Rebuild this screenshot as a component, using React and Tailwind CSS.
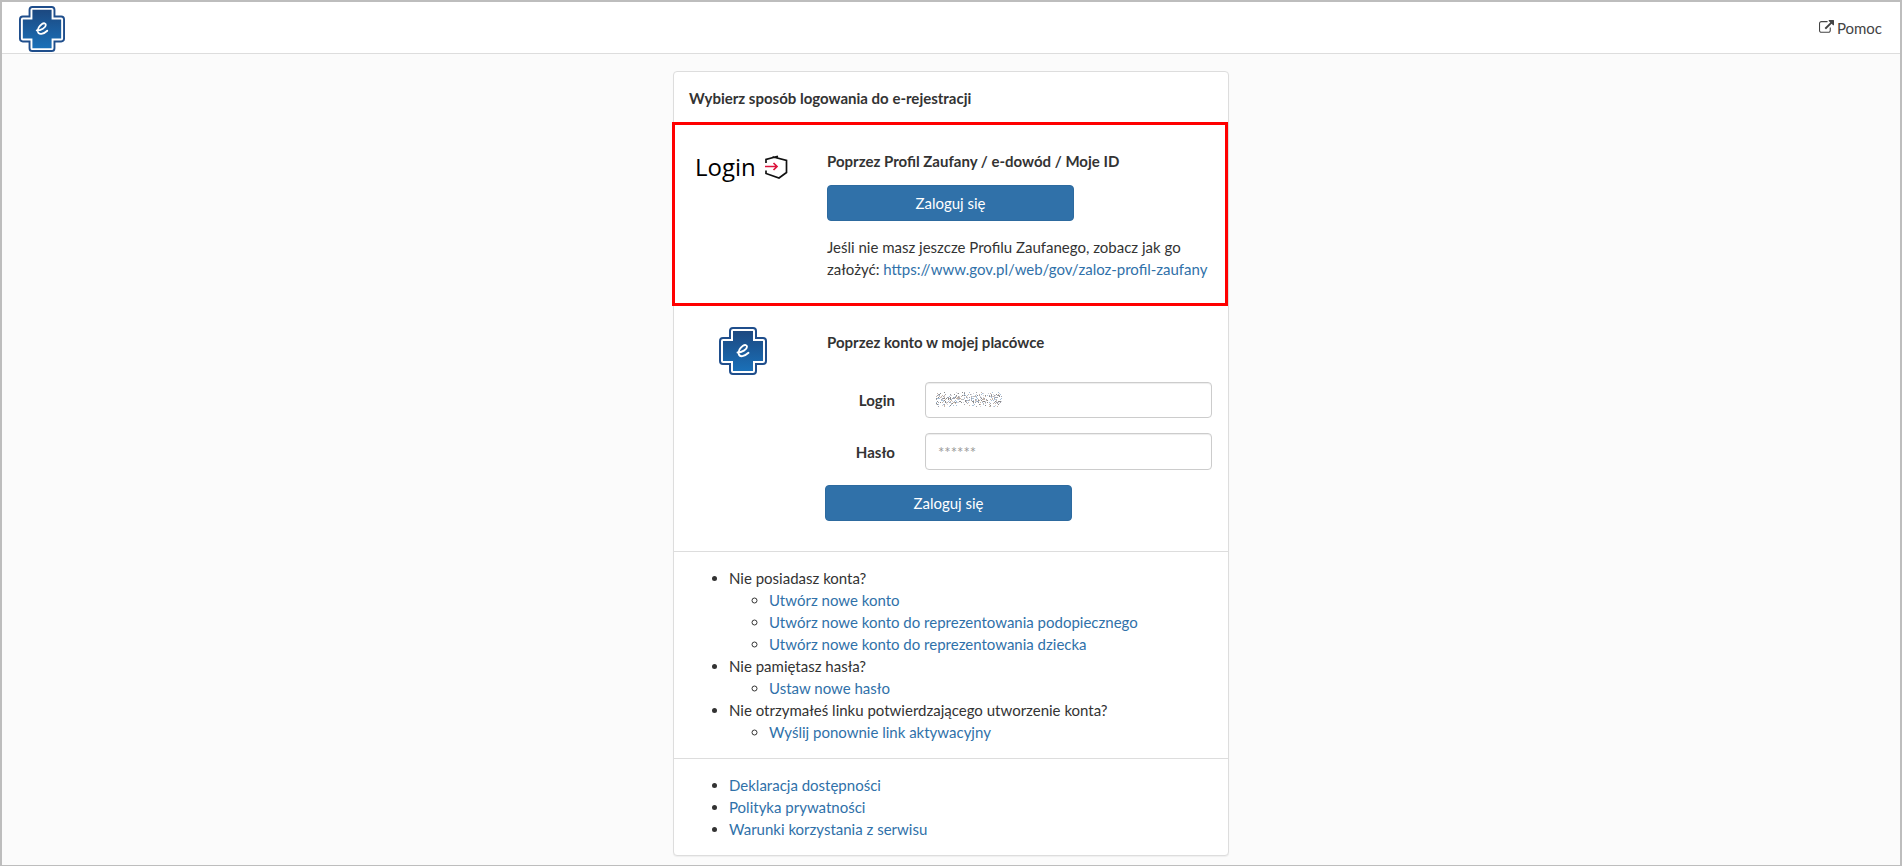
import React from "react";

function CrossLogo({ className }) {
  return (
    <svg viewBox="0 0 48 48" className={className} aria-hidden="true">
      <defs>
        <linearGradient id="crossFill" x1="0" y1="0" x2="0" y2="1">
          <stop offset="0" stopColor="#1c4880" />
          <stop offset="1" stopColor="#1a70b8" />
        </linearGradient>
      </defs>
      <path
        d="M14 1h20q3 0 3 3v7h7q3 0 3 3v20q0 3-3 3h-7v7q0 3-3 3H14q-3 0-3-3v-7H4q-3 0-3-3V14q0-3 3-3h7V4q0-3 3-3z"
        fill="#fff"
        stroke="#1f4e8c"
        strokeWidth="2"
      />
      <path d="M14 4h20v10h10v20H34v10H14V34H4V14h10z" fill="url(#crossFill)" />
      <path
        d="M18.5 25.500C23 25.500 28 22.500 28 19.800C28 18 26 17.400 24 18.800C21 21 19.300 24.500 19.800 27C20.600 30.500 25.500 29.500 29.500 25.800"
        fill="none"
        stroke="#fff"
        strokeWidth="1.900"
        strokeLinecap="round"
      />
    </svg>
  );
}

function ExternalLinkIcon() {
  return (
    <svg viewBox="0 0 1792 1792" className="size-[15px] fill-current" aria-hidden="true">
      <path d="M1408 928v320q0 119-84.5 203.5t-203.5 84.5h-832q-119 0-203.5-84.5t-84.5-203.5v-832q0-119 84.5-203.5t203.5-84.5h704q14 0 23 9t9 23v64q0 14-9 23t-23 9h-704q-66 0-113 47t-47 113v832q0 66 47 113t113 47h832q66 0 113-47t47-113v-320q0-14 9-23t23-9h64q14 0 23 9t9 23zm384-864v512q0 26-19 45t-45 19-45-19l-176-176-652 652q-10 10-23 10t-23-10l-114-114q-10-10-10-23t10-23l652-652-176-176q-19-19-19-45t19-45 45-19h512q26 0 45 19t19 45z" />
    </svg>
  );
}

function LoginLogo() {
  return (
    <div className="flex items-center gap-2 pl-5 text-black">
      <span className="font-['Open_Sans',sans-serif] text-2xl leading-9">Login</span>
      <svg viewBox="0 0 24 26" className="h-[26px] w-6" fill="none" aria-hidden="true">
        <path
          d="M2 9V5.500L14 2.200M8.500 2.800L22.500 6.500V18.500L15 24L2 19.500V16.500"
          stroke="#111"
          strokeWidth="1.700"
        />
        <path d="M1 12.500H13M9.500 9L13 12.500L9.500 16" stroke="#dc143c" strokeWidth="1.700" />
      </svg>
    </div>
  );
}

// Masked user name: scattered specks in a few muted tones
const speckColors = ["#a3a3ad", "#c6b5a8", "#a9c0d8", "#8a8a8a", "#d3d3d9"];
const specks = [];
let seed = 7;
for (let i = 0; i < 400; i++) {
  seed = (seed * 16807) % 2147483647;
  const x = seed % 66;
  seed = (seed * 16807) % 2147483647;
  const y = (seed % 9) + (Math.floor(seed / 16) % 7);
  specks.push({ x, y, color: speckColors[i % 5] });
}

function MaskedName() {
  return (
    <svg
      viewBox="0 0 66 16"
      className="pointer-events-none absolute top-[10px] left-[11px] h-4 w-[66px]"
      shapeRendering="crispEdges"
      aria-hidden="true"
    >
      {specks.map((s, i) => (
        <rect key={i} x={s.x} y={s.y} width="1" height="1" fill={s.color} />
      ))}
    </svg>
  );
}

function TextLink({ children }) {
  return (
    <a href="#" className="text-[#3071a9] hover:underline">
      {children}
    </a>
  );
}

const buttonClass =
  "block h-9 rounded border border-[#2d6a9f] bg-[#3071a9] text-center text-white hover:bg-[#286090]";
const inputClass =
  "block w-full rounded border border-[#ccc] bg-white px-3 shadow-[inset_0_1px_1px_rgba(0,0,0,0.075)] outline-none";

const accountHelp = [
  {
    title: "Nie posiadasz konta?",
    links: [
      "Utwórz nowe konto",
      "Utwórz nowe konto do reprezentowania podopiecznego",
      "Utwórz nowe konto do reprezentowania dziecka",
    ],
  },
  { title: "Nie pamiętasz hasła?", links: ["Ustaw nowe hasło"] },
  {
    title: "Nie otrzymałeś linku potwierdzającego utworzenie konta?",
    links: ["Wyślij ponownie link aktywacyjny"],
  },
];

const siteLinks = [
  "Deklaracja dostępności",
  "Polityka prywatności",
  "Warunki korzystania z serwisu",
];

export default function App() {
  return (
    <div className="min-h-screen border-2 border-[#bdbdbd] bg-[#fbfbfb] font-[Lato,sans-serif] text-[15px] leading-[22px] text-[#333]">
      <header className="flex h-[52px] items-center justify-between border-b border-[#ddd] bg-white px-[17px]">
        <a href="#" aria-label="e-rejestracja" className="pt-0.5">
          <CrossLogo className="size-[46px]" />
        </a>
        <a href="#" className="flex items-center gap-[3px] pr-px text-[#444]">
          <ExternalLinkIcon />
          Pomoc
        </a>
      </header>

      <main className="mx-auto mt-[17px] mb-[9px] max-w-[556px] rounded border border-[#ddd] bg-white shadow-[0_1px_1px_rgba(0,0,0,0.05)]">
        <h1 className="px-[15px] pt-[15px] pb-[13px] font-bold">
          Wybierz sposób logowania do e-rejestracji
        </h1>

        {/* Trusted profile */}
        <section className="-ml-0.5 flex min-h-[184px] border-[3px] border-[#f00]">
          <div className="w-[152px] shrink-0 pt-6">
            <LoginLogo />
          </div>
          <div className="flex-1 pt-[25px]">
            <h2 className="font-bold">Poprzez Profil Zaufany / e-dowód / Moje ID</h2>
            <button type="button" className={`${buttonClass} mt-[13px] w-[247px]`}>
              Zaloguj się
            </button>
            <p className="mt-[15px] pr-4">
              Jeśli nie masz jeszcze Profilu Zaufanego, zobacz jak go założyć:{" "}
              <TextLink>https://www.gov.pl/web/gov/zaloz-profil-zaufany</TextLink>
            </p>
          </div>
        </section>

        {/* Local account */}
        <section className="flex border-b border-[#ddd] pr-4 pb-[30px]">
          <div className="w-[151px] shrink-0 pt-[21px] pl-[45px]">
            <CrossLogo className="size-12" />
          </div>
          <form className="flex-1 pt-[25px]">
            <h2 className="pl-0.5 font-bold">Poprzez konto w mojej placówce</h2>
            <div className="mt-7 flex items-center pt-px">
              <label htmlFor="login" className="w-[70px] text-right font-bold">
                Login
              </label>
              <div className="relative ml-[30px] flex-1">
                <input id="login" type="text" className={`${inputClass} h-9`} />
                <MaskedName />
              </div>
            </div>
            <div className="mt-[15px] flex items-center">
              <label htmlFor="password" className="w-[70px] text-right font-bold">
                Hasło
              </label>
              <div className="ml-[30px] flex-1">
                <input
                  id="password"
                  type="text"
                  placeholder="******"
                  className={`${inputClass} h-[37px] placeholder:text-[#999]`}
                />
              </div>
            </div>
            <button type="button" className={`${buttonClass} mt-[15px] w-[247px]`}>
              Zaloguj się
            </button>
          </form>
        </section>

        <section className="border-b border-[#ddd] p-[15px]">
          <ul className="list-disc pl-10">
            {accountHelp.map((item) => (
              <li key={item.title}>
                {item.title}
                <ul className="list-[circle] pl-10">
                  {item.links.map((link) => (
                    <li key={link}>
                      <TextLink>{link}</TextLink>
                    </li>
                  ))}
                </ul>
              </li>
            ))}
          </ul>
        </section>

        <footer className="p-[15px]">
          <ul className="list-disc pl-10">
            {siteLinks.map((link) => (
              <li key={link}>
                <TextLink>{link}</TextLink>
              </li>
            ))}
          </ul>
        </footer>
      </main>
    </div>
  );
}
